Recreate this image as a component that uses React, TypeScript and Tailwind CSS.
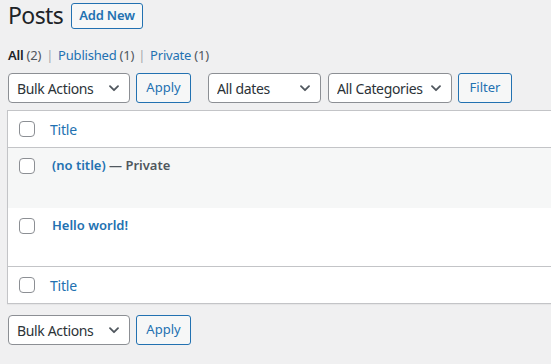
import React from "react";

const font = { fontFamily: '"Noto Sans", "Open Sans", sans-serif' };

function Chevron() {
  return (
    <svg width="10" height="7" viewBox="0 0 10 7" className="shrink-0">
      <path d="M1 1.2 L5 5.2 L9 1.2" fill="none" stroke="#50575e" strokeWidth="1.8" strokeLinecap="round" strokeLinejoin="round" />
    </svg>
  );
}

function Select({ label, w }: { label: string; w: string }) {
  return (
    <div className={`${w} h-[30px] shrink-0 flex items-center pl-[8px] pr-[10px] bg-white border border-[#8c8f94] rounded-[4px] text-[14px] text-[#2c3338]`}>
      <span className="flex-1 whitespace-nowrap overflow-hidden tracking-[-0.35px]">{label}</span>
      <Chevron />
    </div>
  );
}

function Btn({ label, w }: { label: string; w: string }) {
  return (
    <div className={`${w} h-[30px] shrink-0 flex items-center justify-center bg-[#f6f7f7] border border-[#2271b1] rounded-[3px] text-[13px] text-[#2271b1]`}>
      {label}
    </div>
  );
}

function Check() {
  return <div className="w-[16px] h-[16px] shrink-0 bg-white border border-[#8c8f94] rounded-[4px]" />;
}

export default function App() {
  return (
    <div style={font} className="w-[551px] h-[364px] overflow-hidden bg-[#f0f0f1] pl-[8px]">
      <div className="mt-[3px] h-[26px] flex items-center">
        <h1 className="w-[63px] text-[23px] font-normal text-[#1d2327] leading-none -mt-[1px] tracking-[-0.6px]">Posts</h1>
        <div className="h-[26px] w-[72px] flex items-center justify-center border border-[#2271b1] rounded-[3px] bg-[#f6f7f7] text-[13px] font-semibold text-[#2271b1] tracking-[-0.2px]">
          Add New
        </div>
      </div>

      <div className="mt-[17px] h-[18px] flex items-center text-[13px] leading-[18px] tracking-[-0.2px]">
        <span className="font-semibold text-[#1d2327]">All</span>
        <span className="text-[#50575e] ml-[3px]">(2)</span>
        <span className="text-[#a7aaad] mx-[5px]">|</span>
        <span className="text-[#2271b1]">Published</span>
        <span className="text-[#50575e] ml-[3px]">(1)</span>
        <span className="text-[#a7aaad] ml-[4px] mr-[5px]">|</span>
        <span className="text-[#2271b1]">Private</span>
        <span className="text-[#50575e] ml-[3px]">(1)</span>
      </div>

      <div className="mt-[9px] flex items-center">
        <Select label="Bulk Actions" w="w-[122px]" />
        <div className="ml-[6px]"><Btn label="Apply" w="w-[55px]" /></div>
        <div className="ml-[17px]"><Select label="All dates" w="w-[113px]" /></div>
        <div className="ml-[7px]"><Select label="All Categories" w="w-[124px]" /></div>
        <div className="ml-[6px]"><Btn label="Filter" w="w-[54px]" /></div>
      </div>

      <div className="mt-[7px] -ml-[1px] w-[545px] bg-white border border-[#c3c4c7] shadow-[0_1px_1px_rgba(0,0,0,0.04)]">
        <div className="h-[37px] flex items-center border-b border-[#c3c4c7]">
          <div className="ml-[11px]"><Check /></div>
          <span className="ml-[15px] text-[14px] text-[#2271b1] tracking-[-0.2px]">Title</span>
        </div>
        <div className="h-[60px] bg-[#f6f7f7] flex items-start">
          <div className="ml-[11px] mt-[10px]"><Check /></div>
          <div className="ml-[17px] mt-[8px] text-[13px] font-semibold leading-[19px]">
            <span className="text-[#2271b1]">(no title)</span>
            <span className="text-[#50575e]"> — Private</span>
          </div>
        </div>
        <div className="h-[59px] flex items-start border-b border-[#c3c4c7]">
          <div className="ml-[11px] mt-[10px]"><Check /></div>
          <div className="ml-[17px] mt-[8px] text-[13px] font-semibold leading-[19px] text-[#2271b1]">Hello world!</div>
        </div>
        <div className="h-[36px] flex items-center">
          <div className="ml-[11px]"><Check /></div>
          <span className="ml-[15px] text-[14px] text-[#2271b1] tracking-[-0.2px]">Title</span>
        </div>
      </div>

      <div className="mt-[11px] flex items-center">
        <Select label="Bulk Actions" w="w-[122px]" />
        <div className="ml-[6px]"><Btn label="Apply" w="w-[55px]" /></div>
      </div>
    </div>
  );
}
